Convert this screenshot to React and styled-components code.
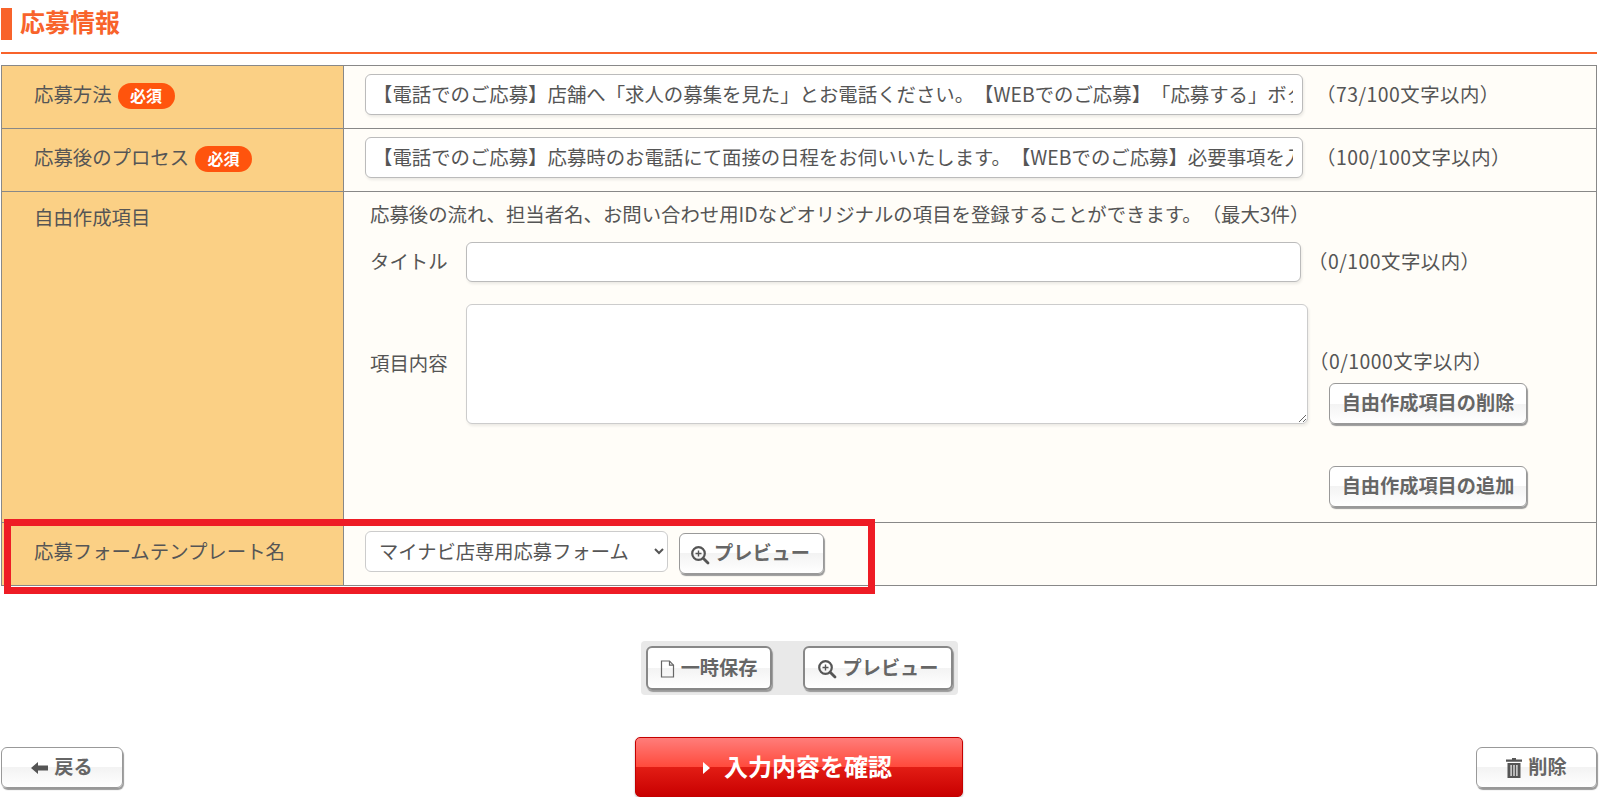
import React from "react";
import styled, { createGlobalStyle } from "styled-components";

const Global = createGlobalStyle`
  html, body { margin: 0; padding: 0; background: #fff; }
  body { font-family: "Noto Sans CJK JP", "Liberation Sans", sans-serif; color: #555; }
  * { box-sizing: border-box; text-spacing-trim: space-all; }
`;

const Page = styled.div`
  width: 1597px;
  padding-left: 1px;
  padding-top: 8px;
`;
const Heading = styled.h2`
  margin: 0 0 11px;
  height: 46px;
  border-bottom: 2px solid #f8632b;
  font-size: 25px;
  line-height: 26px;
  font-weight: 700;
  color: #f8632b;
  display: flex;
  align-items: flex-start;
  gap: 8px;
  &::before {
    content: "";
    width: 11px;
    height: 32px;
    background: #f8632b;
  }
`;
const Table = styled.div`
  border: 1px solid #888;
  background: #fffdf8;
`;
const Row = styled.div`
  position: relative;
  display: grid;
  grid-template-columns: 342px 1fr;
  height: ${(p) => p.$h}px;
  border-top: ${(p) => (p.$first ? "none" : "1px solid #888")};
`;
const Label = styled.div`
  background: #fbd085;
  border-right: 1px solid #888;
  padding: ${(p) => (p.$top ? "11px 0 0 32px" : "0 0 6px 32px")};
  display: flex;
  align-items: ${(p) => (p.$top ? "flex-start" : "center")};
  gap: 6px;
  font-size: 19.4px;
  line-height: 28px;
  color: #555;
`;
const Badge = styled.span`
  display: inline-block;
  width: 57px;
  height: 26px;
  margin-top: 4px;
  border-radius: 13px;
  background: #ff540d;
  color: #fff;
  font-size: 16px;
  font-weight: 700;
  line-height: 24px;
  text-align: center;
`;
const Value = styled.div`
  padding: 0 0 5px 21px;
  display: flex;
  align-items: center;
  font-size: 19.4px;
  color: #555;
`;
const TextField = styled.input`
  width: 938px;
  height: 41px;
  border: 1px solid #bbb;
  border-radius: 6px;
  background: #fff;
  padding: 0 9px 2px 7px;
  font: inherit;
  font-size: 19.4px;
  color: #555;
  box-shadow: 1px 2px 3px rgba(0, 0, 0, 0.08);
  outline: none;
`;
const Count = styled.span`
  margin-left: ${(p) => p.$gap}px;
  padding-bottom: 3px;
  white-space: nowrap;
  font-size: 19.4px;
  letter-spacing: 0.5px;
  color: #555;
`;
const FreeValue = styled.div`
  padding: 8px 0 0 26px;
  font-size: 19.4px;
  color: #555;
`;
const Lead = styled.div`
  line-height: 28px;
  height: 28px;
  white-space: nowrap;
`;
const TitleRow = styled.div`
  display: flex;
  align-items: center;
  margin-top: 14px;
  height: 40px;
`;
const FieldName = styled.span`
  width: 96px;
  flex: none;
  padding-bottom: 3px;
  font-size: 19.4px;
`;
const TitleInput = styled(TextField)`
  width: 835px;
  height: 40px;
  margin: 0;
`;
const BodyRow = styled.div`
  display: flex;
  margin-top: 22px;
  align-items: center;
  height: 120px;
`;
const BodyArea = styled.textarea`
  width: 842px;
  height: 120px;
  flex: none;
  border: 1px solid #ccc;
  border-radius: 6px;
  background: #fff;
  box-shadow: 1px 2px 3px rgba(0, 0, 0, 0.08);
  outline: none;
`;
const BodySide = styled.div`
  margin-left: 1px;
  width: 260px;
  align-self: stretch;
  padding-top: 43px;
  line-height: 28px;
  letter-spacing: 0.5px;
  white-space: nowrap;
`;
const Btn = styled.button`
  display: inline-flex;
  align-items: center;
  justify-content: center;
  gap: 6px;
  height: ${(p) => p.$h || 41}px;
  width: ${(p) => p.$w}px;
  padding: 0 0 3px;
  flex: none;
  border: ${(p) => (p.$strong ? "2px solid #888" : "1px solid #999")};
  border-radius: 6px;
  background: linear-gradient(#fff 0 50%, #f3f3f3 50%, #fff 100%);
  box-shadow: 1px 2px 1px #999;
  font-family: inherit;
  font-size: 19.2px;
  font-weight: 700;
  letter-spacing: 0;
  color: #666;
  svg { margin-top: 5px; }
`;
const DeleteItem = styled(Btn)`
  margin: 8px 0 0 20px;
  display: flex;
`;
const AddRow = styled.div`
  display: flex;
  margin: 42px 0 0 959px;
`;
const SelectWrap = styled.div`
  display: flex;
  align-items: center;
  gap: 11px;
`;
const Select = styled.select`
  width: 303px;
  height: 41px;
  border: 1px solid #ccc;
  border-radius: 6px;
  background: #fff;
  padding: 0 0 2px 9px;
  font: inherit;
  font-size: 19.3px;
  color: #555;
  outline: none;
`;
const SelectPreview = styled(Btn)`
  margin-top: 4px;
  gap: 4px;
  padding-right: 3px;
`;
const Highlight = styled.div`
  position: absolute;
  left: 2px;
  top: -4px;
  width: 871px;
  height: 75px;
  border: 7px solid #ee1c25;
  pointer-events: none;
`;
const SaveBarWrap = styled.div`
  display: flex;
  justify-content: center;
  margin-top: 55px;
`;
const SaveBar = styled.div`
  display: flex;
  align-items: center;
  justify-content: space-between;
  width: 317px;
  height: 54px;
  padding: 0 5px;
  border-radius: 4px;
  background: #e9e9e9;
`;
const Footer = styled.div`
  display: grid;
  grid-template-columns: 1fr auto 1fr;
  align-items: center;
  margin-top: 42px;
`;
const BackBtn = styled(Btn)`
  justify-self: start;
`;
const TrashBtn = styled(Btn)`
  justify-self: end;
`;
const Confirm = styled.button`
  display: flex;
  align-items: center;
  justify-content: center;
  gap: 14px;
  width: 328px;
  height: 60px;
  padding: 0 4px 4px 0;
  border: 1px solid #c40000;
  border-radius: 5px;
  background: linear-gradient(#ff7d7a 0, #ff4a3c 50%, #e21d15 50%, #c90000 100%);
  box-shadow: 0 1px 2px rgba(0,0,0,.3);
  font-family: inherit;
  font-size: 24px;
  font-weight: 700;
  color: #fff;
  svg { margin-top: 6px; }
`;

const Zoom = () => (
  <svg width="20" height="20" viewBox="0 0 20 20" fill="none" stroke="#555">
    <circle cx="8.5" cy="8.5" r="6.3" strokeWidth="2.2" />
    <path d="M13.2 13.2L18 18" strokeWidth="2.8" strokeLinecap="round" />
    <path d="M8.5 5.5v6M5.500 8.500h6" strokeWidth="1.4" />
  </svg>
);
const FileIcon = () => (
  <svg width="15" height="18" viewBox="0 0 15 18" fill="none" stroke="#666" strokeWidth="1.2">
    <path d="M1.500 1h8l4 4.200V17h-12z" />
    <path d="M9.500 1v4.200h4" />
  </svg>
);
const ArrowIcon = () => (
  <svg width="17" height="14" viewBox="0 0 17 14" fill="#555">
    <path d="M0 7l7-6v3.500h10v5H7V13z" />
  </svg>
);
const TrashIcon = () => (
  <svg width="16" height="20" viewBox="0 0 16 20" fill="#555">
    <path d="M6 0h4v1.500h6v2.200H0V1.500h6z" />
    <path d="M1.500 5h13v15h-13zM4.500 7v11h1.200V7zM7.400 7v11h1.200V7zM10.300 7v11h1.200V7z" fillRule="evenodd" />
  </svg>
);
const Tri = () => (
  <svg width="8" height="12" viewBox="0 0 8 12" fill="#fff">
    <path d="M1 0l7 6-7 6z" />
  </svg>
);

export default function App() {
  return (
    <Page>
      <Global />
      <Heading>応募情報</Heading>
      <Table>
        <Row $h={62} $first>
          <Label>応募方法<Badge>必須</Badge></Label>
          <Value>
            <TextField readOnly value="【電話でのご応募】店舗へ「求人の募集を見た」とお電話ください。【WEBでのご応募】「応募する」ボタンよりご応募ください。" />
            <Count $gap={13}>（73/100文字以内）</Count>
          </Value>
        </Row>
        <Row $h={63}>
          <Label>応募後のプロセス<Badge>必須</Badge></Label>
          <Value>
            <TextField readOnly value="【電話でのご応募】応募時のお電話にて面接の日程をお伺いいたします。【WEBでのご応募】必要事項を入力の上ご応募ください。" />
            <Count $gap={13}>（100/100文字以内）</Count>
          </Value>
        </Row>
        <Row $h={331}>
          <Label $top>自由作成項目</Label>
          <FreeValue>
            <Lead>応募後の流れ、担当者名、お問い合わせ用IDなどオリジナルの項目を登録することができます。（最大3件）</Lead>
            <TitleRow>
              <FieldName>タイトル</FieldName>
              <TitleInput />
              <Count $gap={7}>（0/100文字以内）</Count>
            </TitleRow>
            <BodyRow>
              <FieldName>項目内容</FieldName>
              <BodyArea />
              <BodySide>
                （0/1000文字以内）
                <DeleteItem $w={198} $h={41}>自由作成項目の削除</DeleteItem>
              </BodySide>
            </BodyRow>
            <AddRow>
              <Btn $w={198} $h={41}>自由作成項目の追加</Btn>
            </AddRow>
          </FreeValue>
        </Row>
        <Row $h={63}>
          <Label>応募フォームテンプレート名</Label>
          <Value>
            <SelectWrap>
              <Select defaultValue="a">
                <option value="a">マイナビ店専用応募フォーム</option>
              </Select>
              <SelectPreview $w={145} $h={41}><Zoom />プレビュー</SelectPreview>
            </SelectWrap>
          </Value>
          <Highlight />
        </Row>
      </Table>
      <SaveBarWrap>
        <SaveBar>
          <Btn $w={126} $h={44} $strong><FileIcon />一時保存</Btn>
          <Btn $w={150} $h={44} $strong><Zoom />プレビュー</Btn>
        </SaveBar>
      </SaveBarWrap>
      <Footer>
        <BackBtn $w={122} $h={41}><ArrowIcon />戻る</BackBtn>
        <Confirm><Tri />入力内容を確認</Confirm>
        <TrashBtn $w={121} $h={41}><TrashIcon />削除</TrashBtn>
      </Footer>
    </Page>
  );
}
